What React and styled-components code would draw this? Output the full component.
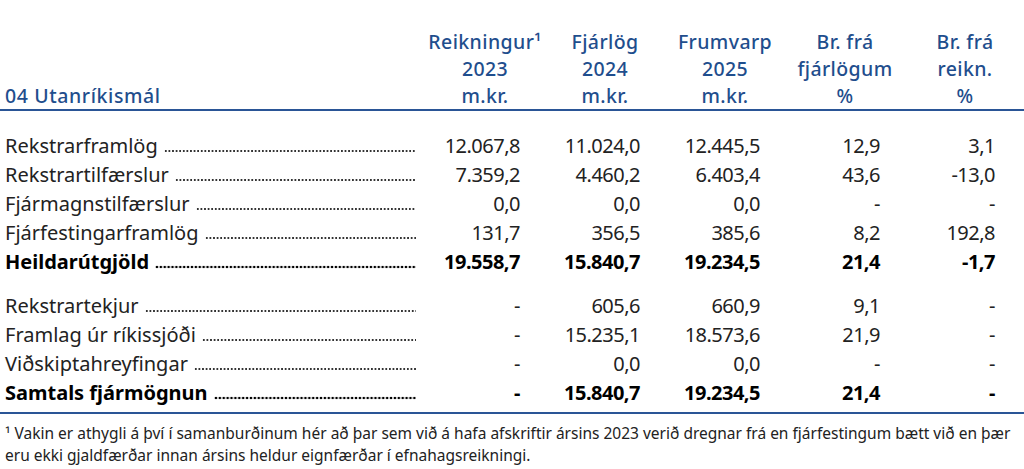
import React from 'react'
import styled, { createGlobalStyle } from 'styled-components'

const columns = [
    ['Reikningur¹', '2023', 'm.kr.'],
    ['Fjárlög', '2024', 'm.kr.'],
    ['Frumvarp', '2025', 'm.kr.'],
    ['Br. frá', 'fjárlögum', '%'],
    ['Br. frá', 'reikn.', '%'],
]

const expenses = [
    { label: 'Rekstrarframlög', values: ['12.067,8', '11.024,0', '12.445,5', '12,9', '3,1'] },
    { label: 'Rekstrartilfærslur', values: ['7.359,2', '4.460,2', '6.403,4', '43,6', '-13,0'] },
    { label: 'Fjármagnstilfærslur', values: ['0,0', '0,0', '0,0', '-', '-'] },
    { label: 'Fjárfestingarframlög', values: ['131,7', '356,5', '385,6', '8,2', '192,8'] },
    { label: 'Heildarútgjöld', values: ['19.558,7', '15.840,7', '19.234,5', '21,4', '-1,7'], total: true },
]

const funding = [
    { label: 'Rekstrartekjur', values: ['-', '605,6', '660,9', '9,1', '-'] },
    { label: 'Framlag úr ríkissjóði', values: ['-', '15.235,1', '18.573,6', '21,9', '-'] },
    { label: 'Viðskiptahreyfingar', values: ['-', '0,0', '0,0', '-', '-'] },
    { label: 'Samtals fjármögnun', values: ['-', '15.840,7', '19.234,5', '21,4', '-'], total: true },
]

function Group({ rows, last }) {
    return (
        <Body $last={last}>
            {rows.map((row) => (
                <Row key={row.label} $total={row.total}>
                    <LabelCell>
                        <span>{row.label}</span>
                        <Leader $total={row.total} />
                    </LabelCell>
                    {row.values.map((v, i) => (
                        <NumCell key={i} $last={i === row.values.length - 1}>{v}</NumCell>
                    ))}
                </Row>
            ))}
        </Body>
    )
}

function App() {
    return (
        <>
            <GlobalStyle />
            <Page>
                {/*table header */}
                <HeadRow>
                    <Title>04 Utanríkismál</Title>
                    {columns.map((lines, i) => (
                        <HeadCell key={i}>
                            {lines.map((l) => <div key={l}>{l}</div>)}
                        </HeadCell>
                    ))}
                </HeadRow>
                {/*expenses */}
                <Group rows={expenses} />
                {/*funding */}
                <Group rows={funding} last />
                {/*footnote */}
                <Footnote>
                    ¹ Vakin er athygli á því í samanburðinum hér að þar sem við á hafa afskriftir ársins 2023 verið dregnar frá en fjárfestingum bætt við en þær eru ekki gjaldfærðar innan ársins heldur eignfærðar í efnahagsreikningi.
                </Footnote>
            </Page>
        </>
    )
}

//style
const GlobalStyle = createGlobalStyle`
    body{
        margin: 0;
        background: white;
        font-family: "Noto Sans", "Open Sans", sans-serif;
    }
`
const Page = styled.div`
    width: 1024px;
    padding-top: 28px;
`
const grid = `
    display: grid;
    grid-template-columns: 425px repeat(5, 120px);
`
const HeadRow = styled.div`
    ${grid}
    color: #1f4e8d;
    font-size: 19.5px;
    font-weight: 500;
    line-height: 27px;
    padding-bottom: 0;
    border-bottom: 2px solid #2a5596;
`
const Title = styled.div`
    align-self: end;
    padding-left: 5px;
    letter-spacing: 0.6px;
`
const HeadCell = styled.div`
    text-align: center;
    letter-spacing: 0.4px;
`
const Body = styled.div`
    padding-top: ${(p) => (p.$last ? '15px' : '20px')};
    padding-bottom: ${(p) => (p.$last ? '5px' : '0')};
    border-bottom: ${(p) => (p.$last ? '2px solid #2a5596' : 'none')};
`
const Row = styled.div`
    ${grid}
    height: 29px;
    align-items: center;
    font-size: 20px;
    color: ${(p) => (p.$total ? '#000' : '#222')};
    font-weight: ${(p) => (p.$total ? 700 : 400)};
`
const LabelCell = styled.div`
    display: flex;
    align-items: baseline;
    padding-left: 5px;
    padding-right: 9px;
    white-space: nowrap;
`
const Leader = styled.span`
    flex: 1;
    margin-left: 6px;
    height: 4px;
    align-self: flex-end;
    margin-bottom: 6px;
    background-image: radial-gradient(circle, ${(p) => (p.$total ? '#000 1.3px' : '#333 0.95px')}, transparent ${(p) => (p.$total ? '1.6px' : '1.3px')});
    background-size: ${(p) => (p.$total ? '3.9px' : '3.6px')} 4px;
    background-repeat: repeat-x;
`
const NumCell = styled.div`
    text-align: right;
    letter-spacing: -0.5px;
    padding-right: ${(p) => (p.$last ? '30px' : '25px')};
`
const Footnote = styled.p`
    margin: 8px 0 0;
    padding: 0 5px;
    font-size: 15.5px;
    line-height: 22px;
    color: #222;
`

export default App
